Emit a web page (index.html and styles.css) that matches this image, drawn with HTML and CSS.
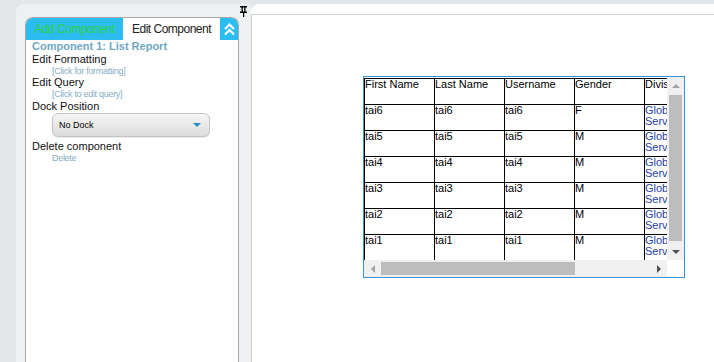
FILE: index.html
```html
<!DOCTYPE html>
<html lang="en">
<head>
  <meta charset="UTF-8">
  <title>Report Designer</title>
  <link rel="stylesheet" href="styles.css">
</head>
<body>
  <div class="sidebar">
    <svg class="pin" width="7" height="11" viewBox="0 0 7 11">
      <rect x="0" y="0" width="7" height="1.5" fill="#000"/>
      <rect x="1.5" y="1" width="1.3" height="5" fill="#000"/>
      <rect x="4.2" y="1" width="1.3" height="5" fill="#000"/>
      <rect x="0" y="5.5" width="7" height="1.5" fill="#000"/>
      <rect x="3" y="6" width="1.2" height="5" fill="#000"/>
    </svg>
    <div class="panel">
      <div class="tabs">
        <div class="tab tab-add">Add Component</div>
        <div class="tab tab-edit">Edit Component</div>
        <div class="collapse">
          <svg width="11" height="13" viewBox="0 0 11 13">
            <polyline points="1,6 5.5,1.5 10,6" fill="none" stroke="#fff" stroke-width="2.2"/>
            <polyline points="1,11.5 5.5,7 10,11.5" fill="none" stroke="#fff" stroke-width="2.2"/>
          </svg>
        </div>
      </div>
      <div class="props">
        <div class="title">Component 1: List Report</div>
        <div class="label">Edit Formatting</div>
        <div class="hint">[Click for formatting]</div>
        <div class="label">Edit Query</div>
        <div class="hint">[Click to edit query]</div>
        <div class="label dock">Dock Position</div>
        <div class="select">
          <span>No Dock</span>
          <span class="caret"></span>
        </div>
        <div class="label delete">Delete component</div>
        <div class="hint">Delete</div>
      </div>
    </div>
  </div>

  <div class="main">
    <div class="canvas">
      <div class="report">
        <div class="viewport">
          <table class="list">
            <thead>
              <tr>
                <th>First Name</th>
                <th>Last Name</th>
                <th>Username</th>
                <th>Gender</th>
                <th>Division</th>
              </tr>
            </thead>
            <tbody>
              <tr><td>tai6</td><td>tai6</td><td>tai6</td><td>F</td><td class="div">Global Services</td></tr>
              <tr><td>tai5</td><td>tai5</td><td>tai5</td><td>M</td><td class="div">Global Services</td></tr>
              <tr><td>tai4</td><td>tai4</td><td>tai4</td><td>M</td><td class="div">Global Services</td></tr>
              <tr><td>tai3</td><td>tai3</td><td>tai3</td><td>M</td><td class="div">Global Services</td></tr>
              <tr><td>tai2</td><td>tai2</td><td>tai2</td><td>M</td><td class="div">Global Services</td></tr>
              <tr><td>tai1</td><td>tai1</td><td>tai1</td><td>M</td><td class="div">Global Services</td></tr>
            </tbody>
          </table>
        </div>
        <div class="vbar">
          <div class="btn"><span class="arr up"></span></div>
          <div class="vthumb"></div>
          <div class="btn"><span class="arr down"></span></div>
        </div>
        <div class="hbar">
          <div class="btn"><span class="arr left"></span></div>
          <div class="hthumb"></div>
          <div class="btn"><span class="arr right"></span></div>
        </div>
        <div class="corner"></div>
      </div>
    </div>
  </div>
</body>
</html>
```

FILE: styles.css
```css
html, body{
  margin:0;
  height:362px;
  overflow:hidden;
}
body{
  display:flex;
  background:#e3e7e9;
  font-family:"Liberation Sans", Arial, sans-serif;
  font-size:11px;
  color:#000;
}

/* left properties panel */
.sidebar{
  position:relative;
  box-sizing:border-box;
  width:235px;
  margin:4px 0 0 16px;
  padding:13px 12px 0 9px;
  background:#eef1f1;
  border-top-left-radius:8px;
}
.pin{
  position:absolute;
  left:224px;
  top:2px;
}
.panel{
  box-sizing:border-box;
  height:100%;
  background:#fff;
  border:1px solid #a9a9a9;
  border-bottom:none;
  border-radius:8px 8px 0 0;
  overflow:hidden;
}
.tabs{
  display:flex;
  height:22px;
}
.tab{
  width:97px;
  line-height:22px;
  text-align:center;
  font-size:12px;
  letter-spacing:-0.5px;
}
.tab-add{
  background:#2bbdf1;
  color:#2fd046;
}
.tab-edit{
  background:#fff;
  color:#222;
}
.collapse{
  flex:1;
  display:flex;
  align-items:center;
  justify-content:center;
  background:#2bbdf1;
}
.props{
  padding-left:6px;
}
.title{
  font-weight:bold;
  color:#6fa7c4;
  line-height:13px;
}
.label{
  line-height:13px;
  color:#111;
}
.hint{
  padding-left:20px;
  font-size:9px;
  letter-spacing:-0.3px;
  line-height:10px;
  color:#86adc6;
}
.label.dock{
  margin-top:1px;
}
.select{
  box-sizing:border-box;
  display:flex;
  align-items:center;
  justify-content:space-between;
  width:158px;
  height:24px;
  margin-left:20px;
  padding:0 8px 0 6px;
  border:1px solid #c4c4c4;
  border-radius:6px;
  background:linear-gradient(#f6f6f6, #dcdcdc);
  box-shadow:0 1px 1px rgba(0,0,0,0.08);
  font-size:9px;
}
.caret{
  width:0;
  height:0;
  border-left:4px solid transparent;
  border-right:4px solid transparent;
  border-top:4px solid #1f8fca;
}
.label.delete{
  margin-top:3px;
}

/* report canvas */
.main{
  flex:1;
  display:flex;
  flex-direction:column;
  margin-top:4px;
  padding-top:10px;
  background:#fff;
  border-top-left-radius:8px;
}
.canvas{
  flex:1;
  border-top:1px solid #d2d2d2;
  border-left:1px solid #cfcfcf;
  padding:61px 0 0 111px;
}
.report{
  display:grid;
  grid-template-columns:303px 17px;
  grid-template-rows:183px 17px;
  width:320px;
  border:1px solid #3b93d6;
}
.viewport{
  overflow:hidden;
  padding-top:1px;
  box-sizing:border-box;
}
.list{
  border-collapse:collapse;
  table-layout:fixed;
  width:350px;
}
.list th, .list td{
  width:69px;
  height:25px;
  padding:0;
  border:1px solid #000;
  vertical-align:top;
  text-align:left;
  font-weight:normal;
  font-size:11px;
  line-height:11px;
}
.list td.div{
  color:#1f43a8;
}

/* scrollbars */
.vbar, .hbar{
  display:flex;
  background:#f0f0f0;
}
.vbar{
  flex-direction:column;
}
.btn{
  width:17px;
  height:17px;
  display:flex;
  align-items:center;
  justify-content:center;
  flex:none;
}
.vthumb{
  margin:1px 2px 0;
  height:146px;
  background:#bdbdbd;
}
.vbar .btn:last-child{
  margin-top:auto;
}
.hthumb{
  margin:2px 0;
  width:194px;
  background:#bdbdbd;
}
.hbar .btn:last-child{
  margin-left:auto;
}
.arr{
  width:0;
  height:0;
}
.arr.up{
  border-left:4px solid transparent;
  border-right:4px solid transparent;
  border-bottom:4px solid #a3a3a3;
}
.arr.down{
  border-left:4px solid transparent;
  border-right:4px solid transparent;
  border-top:4px solid #505050;
}
.arr.left{
  border-top:4px solid transparent;
  border-bottom:4px solid transparent;
  border-right:4px solid #a3a3a3;
}
.arr.right{
  border-top:4px solid transparent;
  border-bottom:4px solid transparent;
  border-left:4px solid #505050;
}
.corner{
  background:#fff;
}
```
